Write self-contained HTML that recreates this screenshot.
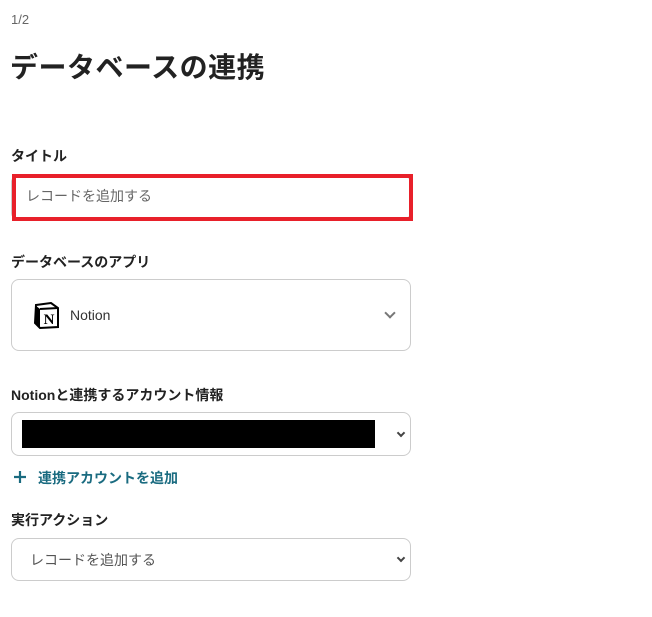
<!DOCTYPE html>
<html><head><meta charset="utf-8"><style>
body{margin:0;width:652px;height:617px;background:#fff;font-family:"Liberation Sans","Noto Sans CJK JP",sans-serif;color:#222;position:relative;overflow:hidden}
.a{position:absolute}
.lbl{font-size:14px;font-weight:bold;color:#222;left:11px}
.box{border:1px solid #ccc;border-radius:8px;left:11px;width:400px;box-sizing:border-box}
.chev{position:absolute;width:6px;height:6px;border-right:2px solid #666;border-bottom:2px solid #666;transform:rotate(45deg)}
</style></head><body>
<div class="a" style="left:11px;top:12px;font-size:13px;color:#666">1/2</div>
<div class="a" style="left:10px;top:46px;font-size:28px;font-weight:bold;color:#222;letter-spacing:0.5px">データベースの連携</div>
<div class="a lbl" style="top:146px">タイトル</div>
<div class="a box" style="top:176px;height:43px;width:400px;border-radius:6px"></div>
<div class="a" style="left:12px;top:174px;width:401px;height:47px;box-sizing:border-box;border:4px solid #e8202a"></div>
<div class="a" style="left:26px;top:186px;font-size:14px;color:#666">レコードを追加する</div>
<div class="a lbl" style="top:252px">データベースのアプリ</div>
<div class="a box" style="top:279px;height:72px"></div>
<svg class="a" style="left:34px;top:302px" width="26" height="27" viewBox="0 0 26 27"><path d="M2 3 L17 1 L24 6 L24 25 L6 26 L1 21 Z" fill="#fff" stroke="#000" stroke-width="2"/><path d="M1 3 L6 7 L6 26 L1 21Z" fill="#000"/><path d="M6 7 L24 6" stroke="#000" stroke-width="2"/><text x="15" y="22" font-family="Liberation Serif" font-weight="bold" font-size="15" text-anchor="middle" fill="#000">N</text></svg>
<div class="a" style="left:70px;top:307px;font-size:14px;color:#333">Notion</div>
<div class="chev" style="left:386px;top:309px;border-color:#777"></div>
<div class="a lbl" style="top:385px">Notionと連携するアカウント情報</div>
<div class="a box" style="top:412px;height:44px"></div>
<div class="a" style="left:22px;top:420px;width:353px;height:28px;background:#000"></div>
<div class="chev" style="left:398px;top:430px;width:4px;height:4px;border-color:#444"></div>
<svg class="a" style="left:13px;top:470px" width="14" height="14"><path d="M7 1V13M1 7H13" stroke="#1a6b80" stroke-width="2.2"/></svg>
<div class="a" style="left:38px;top:468px;font-size:14px;font-weight:bold;color:#1a6b80">連携アカウントを追加</div>
<div class="a lbl" style="top:510px">実行アクション</div>
<div class="a box" style="top:538px;height:43px"></div>
<div class="a" style="left:30px;top:550px;font-size:14px;color:#555">レコードを追加する</div>
<div class="chev" style="left:398px;top:555px;width:4px;height:4px;border-color:#444"></div>
</body></html>
